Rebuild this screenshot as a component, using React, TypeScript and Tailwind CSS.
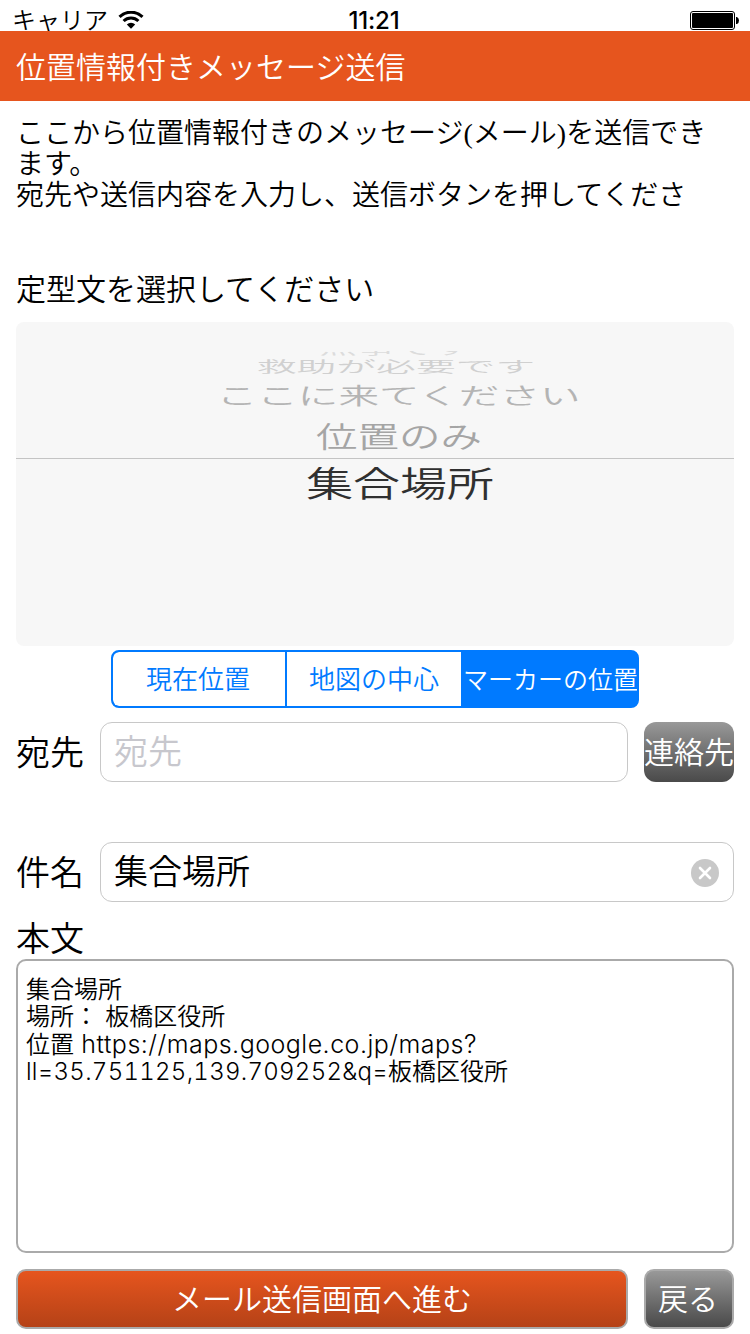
import type { ReactNode } from 'react';

function WifiIcon() {
  return (
    <svg className="ml-[10px] mt-[4px] h-[18px] w-[26px]" viewBox="0 0 26 18">
      <path d="M1.500 5.900a16.300 16.300 0 0 1 23 0" fill="none" stroke="#000" strokeWidth="3" />
      <path d="M5.600 10a10.500 10.500 0 0 1 14.800 0" fill="none" stroke="#000" strokeWidth="3" />
      <path d="M8.800 13.400a6 6 0 0 1 8.400 0L13 17.800Z" fill="#000" />
    </svg>
  );
}

function BatteryIcon() {
  return (
    <svg className="h-[19px] w-[50px]" viewBox="0 0 50 19">
      <rect x="0.5" y="0.5" width="44" height="18" rx="2.5" fill="#fff" stroke="#000" />
      <rect x="2" y="2" width="41" height="15" rx="1" fill="#000" />
      <path d="M46 6h1q2 1 2 3.500t-2 3.500h-1z" fill="#000" />
    </svg>
  );
}

function StatusBar() {
  return (
    <header className="grid h-[31px] grid-cols-3 bg-white">
      <div className="flex pl-[12px] pt-[7px]">
        <span className="text-[24px] leading-[24px]">キャリア</span>
        <WifiIcon />
      </div>
      <div className="pr-[2px] pt-[9px] text-center font-['Inter','Liberation_Sans',sans-serif] text-[24px] font-medium leading-[24px] tracking-[-0.2px]">
        11:21
      </div>
      <div className="flex justify-end pr-[10px] pt-[11px]">
        <BatteryIcon />
      </div>
    </header>
  );
}

function Picker() {
  return (
    <div className="mx-4 h-[324px] overflow-hidden rounded-lg bg-[#f7f7f7] pl-[50px] pt-[29px] text-center">
      <div className="flex h-[5px] items-end justify-center overflow-hidden text-[#dcdcdc]">
        <span className="inline-block h-[20px] origin-bottom -translate-x-[5px] scale-x-[1.9] scale-y-[0.8] text-[20px] leading-[20px]">
          無事です
        </span>
      </div>
      <div className="flex h-[22px] items-center justify-center text-[#d0d0d0]">
        <span className="-translate-x-1 -translate-y-px scale-x-[1.99] scale-y-[0.72] text-[20px] leading-[22px]">救助が必要です</span>
      </div>
      <div className="flex h-[36px] items-center justify-center text-[#b4b4b4]">
        <span className="-translate-x-px -translate-y-0.5 scale-x-[1.69] scale-y-[0.95] text-[24px] leading-[30px]">
          ここに来てください
        </span>
      </div>
      <div className="flex h-[44px] items-center justify-center text-[#a5a5a5]">
        <span className="-translate-x-px -translate-y-px scale-x-[1.43] text-[29px] leading-[40px]">位置のみ</span>
      </div>
      <div className="-ml-[50px] h-px bg-[#c4c4c4]" />
      <div className="flex h-[46px] items-center justify-center text-[#303030]">
        <span className="scale-x-[1.34] text-[35px] leading-[46px]">集合場所</span>
      </div>
    </div>
  );
}

function Segments() {
  return (
    <div className="mx-auto mt-1 flex h-[58px] w-[528px] overflow-hidden rounded-lg border-2 border-[#007aff] bg-[#007aff] text-[26px] leading-[48px] text-[#007aff]">
      <button className="mr-[2px] w-[172px] rounded-l-[6px] bg-white pb-[2px] pr-[2px]">現在位置</button>
      <button className="w-[174px] bg-white pb-[2px]">地図の中心</button>
      <button className="flex w-[176px] items-center justify-center whitespace-nowrap pb-[3px] pl-[3px] text-[25px] text-white">
        マーカーの位置
      </button>
    </div>
  );
}

function Label({ children }: { children: ReactNode }) {
  return <span className="w-[84px] shrink-0 text-[34px] leading-[57px]">{children}</span>;
}

export default function App() {
  return (
    <div className="flex h-[1334px] w-[750px] flex-col overflow-hidden bg-white font-['Noto_Sans_CJK_JP',sans-serif] font-[350] text-black">
      <StatusBar />
      <h1 className="h-[70px] bg-[#e6551e] pl-4 text-[30px] font-[350] leading-[69px] text-white">位置情報付きメッセージ送信</h1>

      <div className="ml-4 mt-[15px] h-[94px] whitespace-nowrap text-[28px] leading-[31px]">
        <div className="h-[31px]">
          ここから位置情報付きのメッセージ
          <span className="font-['Liberation_Serif',serif]">(</span>メール
          <span className="font-['Liberation_Serif',serif]">)</span>を送信でき
        </div>
        <div className="h-[31px]">ます。</div>
        <div className="h-[31px]">宛先や送信内容を入力し、送信ボタンを押してくださ</div>
      </div>
      <h2 className="ml-4 mt-[57px] h-[55px] text-[30px] font-[350] leading-[40px]">定型文を選択してください</h2>

      <Picker />
      <Segments />

      <div className="mx-4 mt-[14px] flex h-[60px]">
        <Label>宛先</Label>
        <div className="flex-1 rounded-xl border border-[#c8c8c8] pl-[13px] text-[34px] leading-[53px] text-[#c7c7cd]">宛先</div>
        <button className="ml-4 flex w-[90px] items-center justify-center whitespace-nowrap rounded-xl bg-linear-to-b from-[#999] to-[#4a4a4a] pb-[3px] text-[30px] text-white">
          連絡先
        </button>
      </div>

      <div className="mx-4 mt-[60px] flex h-[60px]">
        <Label>件名</Label>
        <div className="flex flex-1 items-center justify-between rounded-xl border border-[#c8c8c8] pl-[13px] pr-[14px]">
          <span className="pb-[5px] text-[34px] leading-[52px]">集合場所</span>
          <svg className="mt-[2px] h-7 w-7" viewBox="0 0 28 28">
            <circle cx="14" cy="14" r="14" fill="#c8c8c8" />
            <path d="m9 9 10 10M19 9 9 19" stroke="#fff" strokeWidth="2.600" strokeLinecap="round" />
          </svg>
        </div>
      </div>

      <div className="ml-4 h-[57px] text-[34px] leading-[69px]">本文</div>
      <div className="mx-4 h-[294px] whitespace-nowrap rounded-[10px] border-2 border-[#aaa] pl-2 pt-[13px] text-[24px] leading-[27px]">
        <div className="h-[27px]">集合場所</div>
        <div className="h-[28px]">
          場所： <span className="ml-[2px]">板橋区役所</span>
        </div>
        <div className="h-[27px]">
          位置{' '}
          <span className="ml-[2px] font-['Inter',sans-serif] text-[25px] font-light leading-[27px] tracking-[0.48px]">
            https://maps.google.co.jp/maps?
          </span>
        </div>
        <div className="h-[27px]">
          <span className="font-['Inter',sans-serif] font-light tabular-nums tracking-[0.27px]">ll=35.751125,139.709252&amp;q=</span>
          板橋区役所
        </div>
      </div>

      <div className="mx-4 mt-4 flex h-[60px] gap-4 text-[30px] leading-[53px] text-white">
        <button className="w-[612px] rounded-[10px] border-2 border-[#aaa] bg-linear-to-b from-[#e6551e] to-[#b54217] pb-[3px]">
          メール送信画面へ進む
        </button>
        <button className="w-[90px] rounded-[10px] border-2 border-[#aaa] bg-linear-to-b from-[#999] to-[#4a4a4a] pb-[3px] pr-[2px]">
          戻る
        </button>
      </div>
    </div>
  );
}
